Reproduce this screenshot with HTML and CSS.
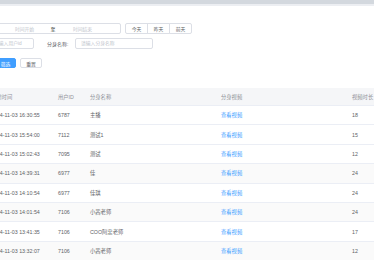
FILE: index.html
```html
<!DOCTYPE html>
<html lang="zh-CN">
  <head>
    <meta charset="UTF-8">
    <meta name="viewport" content="width=device-width, initial-scale=1.0">
    <title>分身视频记录</title>
    <link rel="stylesheet" href="styles.css">
  </head>
  <body>
    <div class="topbar"></div>

    <main class="content">
      <section class="filters">
        <div class="filter-row">
          <div class="date-range">
            <span class="range-input start">时间开始</span>
            <span class="range-sep">至</span>
            <span class="range-input end">时间结束</span>
          </div>
          <div class="quick-days">
            <button>今天</button>
            <button>昨天</button>
            <button>前天</button>
          </div>
        </div>

        <div class="filter-row">
          <input class="text-input user-id" placeholder="请输入用户id">
          <label class="filter-label">分身名称:</label>
          <input class="text-input clone-name" placeholder="请输入分身名称">
        </div>

        <div class="filter-row actions">
          <button class="btn btn-primary">筛选</button>
          <button class="btn">重置</button>
        </div>
      </section>

      <table class="records">
        <colgroup>
          <col class="col-time">
          <col class="col-uid">
          <col class="col-name">
          <col class="col-video">
          <col class="col-length">
        </colgroup>
        <thead>
          <tr>
            <th>创建时间</th>
            <th>用户ID</th>
            <th>分身名称</th>
            <th>分身视频</th>
            <th>视频时长</th>
          </tr>
        </thead>
        <tbody>
          <tr>
            <td>2024-11-03 16:30:55</td><td>6787</td><td>主播</td><td><a href="#">查看视频</a></td><td>18</td>
          </tr>
          <tr>
            <td>2024-11-03 15:54:00</td><td>7112</td><td>测试1</td><td><a href="#">查看视频</a></td><td>15</td>
          </tr>
          <tr>
            <td>2024-11-03 15:02:43</td><td>7095</td><td>测试</td><td><a href="#">查看视频</a></td><td>12</td>
          </tr>
          <tr class="striped">
            <td>2024-11-03 14:39:31</td><td>6977</td><td>佳</td><td><a href="#">查看视频</a></td><td>24</td>
          </tr>
          <tr>
            <td>2024-11-03 14:10:54</td><td>6977</td><td>佳琪</td><td><a href="#">查看视频</a></td><td>24</td>
          </tr>
          <tr class="striped">
            <td>2024-11-03 14:01:54</td><td>7106</td><td>小茜老师</td><td><a href="#">查看视频</a></td><td>24</td>
          </tr>
          <tr>
            <td>2024-11-03 13:41:35</td><td>7106</td><td>COO阿忠老师</td><td><a href="#">查看视频</a></td><td>17</td>
          </tr>
          <tr class="striped">
            <td>2024-11-03 13:32:07</td><td>7106</td><td>小茜老师</td><td><a href="#">查看视频</a></td><td>12</td>
          </tr>
        </tbody>
      </table>
    </main>
  </body>
</html>
```

FILE: styles.css
```css
body {
  margin: 0;
  font-family: "Liberation Sans", "Noto Sans CJK SC", sans-serif;
  color: #606266;
  background: #fff;
  overflow: hidden;
}

.topbar {
  height: 4px;
  background-color: #d3d8de;
  border-bottom: 2px solid #eceef2;
}

/* the page is scrolled a little to the right */
.content {
  margin-left: -20px;
}

.filters {
  padding-top: 17px;
}

.filter-row {
  display: flex;
  align-items: center;
  height: 11px;
  margin-bottom: 4px;
}

.filter-row.actions {
  height: 10px;
  margin-top: 9px;
  margin-bottom: 0;
}

.date-range {
  display: flex;
  align-items: center;
  box-sizing: border-box;
  width: 141px;
  height: 11px;
  padding: 0 12px 0 19px;
  border: 1px solid #dcdfe6;
  border-radius: 2px;
  font-size: 4.8px;
}

.range-input {
  width: 50px;
  text-align: center;
  color: #c0c4cc;
}

.range-input.end {
  width: 52px;
}

.range-sep {
  width: 8px;
  text-align: center;
  color: #303133;
  font-size: 5px;
}

.quick-days {
  display: flex;
  width: 67px;
  height: 11px;
  margin-left: 4px;
}

.quick-days button {
  flex: 1;
  padding: 0;
  border: 1px solid #dcdfe6;
  background: #fff;
  color: #606266;
  font-family: inherit;
  font-size: 4.8px;
}

.quick-days button + button {
  margin-left: -1px;
}

.quick-days button:first-child {
  border-radius: 2px 0 0 2px;
}

.quick-days button:last-child {
  border-radius: 0 2px 2px 0;
}

.text-input {
  box-sizing: border-box;
  height: 11px;
  padding: 0 5px;
  border: 1px solid #dcdfe6;
  border-radius: 2px;
  font-family: inherit;
  font-size: 4.8px;
  color: #606266;
  outline: none;
}

.text-input::placeholder {
  color: #c0c4cc;
}

.user-id {
  width: 54px;
  padding-left: 13px;
}

.clone-name {
  width: 78px;
  margin-left: 5px;
}

.filter-label {
  flex: 0 0 23px;
  margin-left: 13px;
  font-size: 5px;
  color: #606266;
}

.btn {
  box-sizing: border-box;
  width: 22px;
  height: 10px;
  margin-left: 4px;
  padding: 0;
  border: 1px solid #dcdfe6;
  border-radius: 2px;
  background: #fff;
  color: #606266;
  font-family: inherit;
  font-size: 4.8px;
}

.btn-primary {
  width: 21px;
  margin-left: 15px;
  border-color: #409eff;
  background: #409eff;
  color: #fff;
}

.records {
  width: 440px;
  margin: 20px 0 0 6px;
  border-collapse: collapse;
  table-layout: fixed;
  font-size: 5.3px;
}

.col-time { width: 67px; }
.col-uid { width: 32px; }
.col-name { width: 131px; }
.col-video { width: 131px; }
.col-length { width: 79px; }

.records th {
  height: 17px;
  padding: 0 0 0 5px;
  background-color: #f5f6f8;
  color: #909399;
  font-weight: normal;
  text-align: left;
  border-bottom: 1px solid #ebeef5;
}

.records td {
  height: 18.4px;
  padding: 0 0 0 5px;
  border-bottom: 1px solid #ebeef5;
  white-space: nowrap;
}

.records tr.striped td {
  background-color: #fafafa;
}

.records a {
  color: #409eff;
  text-decoration: none;
}
```
